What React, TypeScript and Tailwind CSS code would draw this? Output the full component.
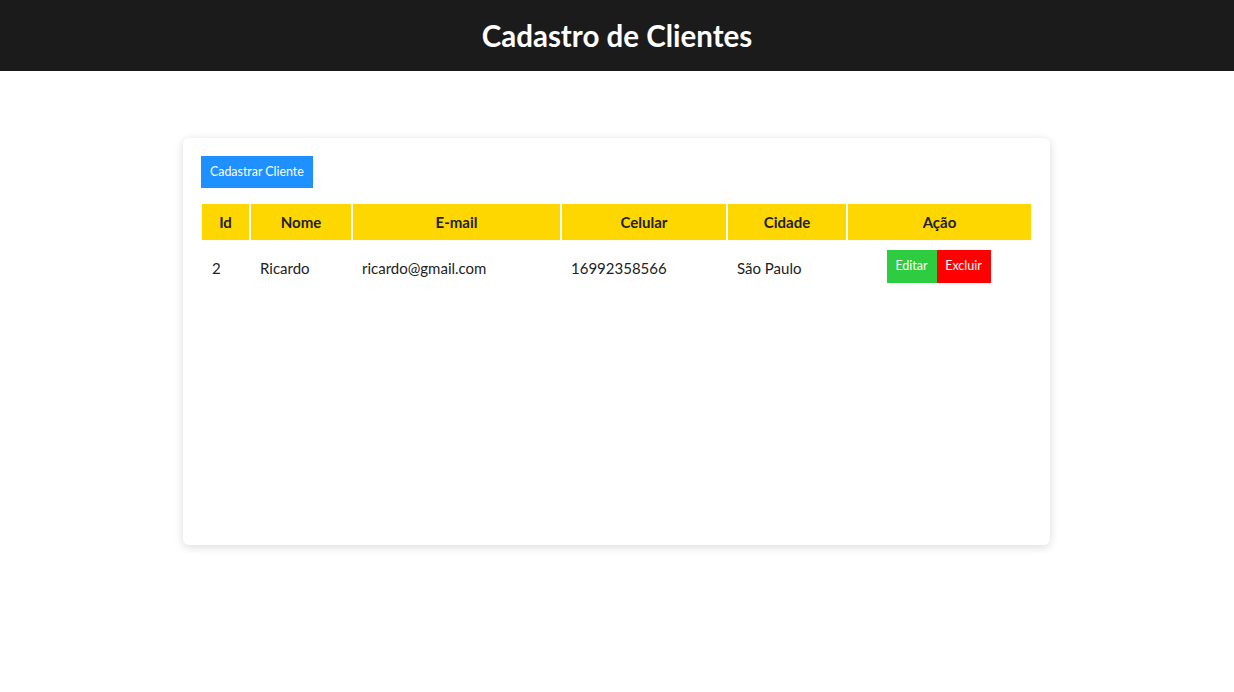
export default function App() {
  const ths = [
    { t: "Id", w: "w-[47px]" },
    { t: "Nome", w: "w-[100px]" },
    { t: "E-mail", w: "w-[207px]" },
    { t: "Celular", w: "w-[164px]" },
    { t: "Cidade", w: "w-[118px]" },
    { t: "Ação", w: "w-[183px]" },
  ];
  return (
    <div className="min-h-[692px] bg-white font-['Lato','Liberation_Sans',sans-serif] text-[#222]">
      <header className="h-[71px] bg-[#1b1b1b] flex items-center justify-center">
        <h1 className="text-white text-[29.5px] font-bold leading-none">Cadastro de Clientes</h1>
      </header>
      <main className="flex justify-center pt-[67px]">
        <div className="w-[867px] h-[407px] bg-white rounded-[6px] shadow-[0_2px_10px_rgba(0,0,0,0.15)] pt-[18px] px-[17px] ml-[-1px]">
          <button className="h-[32px] px-[9px] bg-[#1e90ff] text-white text-[12.4px] ml-[1px]">Cadastrar Cliente</button>
          <table className="mt-[14px] border-separate border-spacing-[2px] w-[833px] text-[15px]">
            <thead>
              <tr>
                {ths.map((h) => (
                  <th key={h.t} className={`${h.w} h-[36px] bg-[#ffd700] font-bold text-center p-0`}>{h.t}</th>
                ))}
              </tr>
            </thead>
            <tbody>
              <tr>
                <td className="px-[10px] pt-[10px] pb-[6px]">2</td>
                <td className="px-[9px] pt-[10px] pb-[6px]">Ricardo</td>
                <td className="px-[9px] pt-[10px] pb-[6px]">ricardo@gmail.com</td>
                <td className="px-[9px] pt-[10px] pb-[6px]">16992358566</td>
                <td className="px-[9px] pt-[10px] pb-[6px]">São Paulo</td>
                <td className="pt-[8px] pb-[8px]">
                  <div className="flex justify-center pr-[2px]">
                    <button className="w-[50px] h-[33px] bg-[#2ecc40] text-white text-[12.5px]">Editar</button>
                    <button className="w-[54px] h-[33px] bg-[#ff0000] text-white text-[12.5px]">Excluir</button>
                  </div>
                </td>
              </tr>
            </tbody>
          </table>
        </div>
      </main>
    </div>
  );
}
